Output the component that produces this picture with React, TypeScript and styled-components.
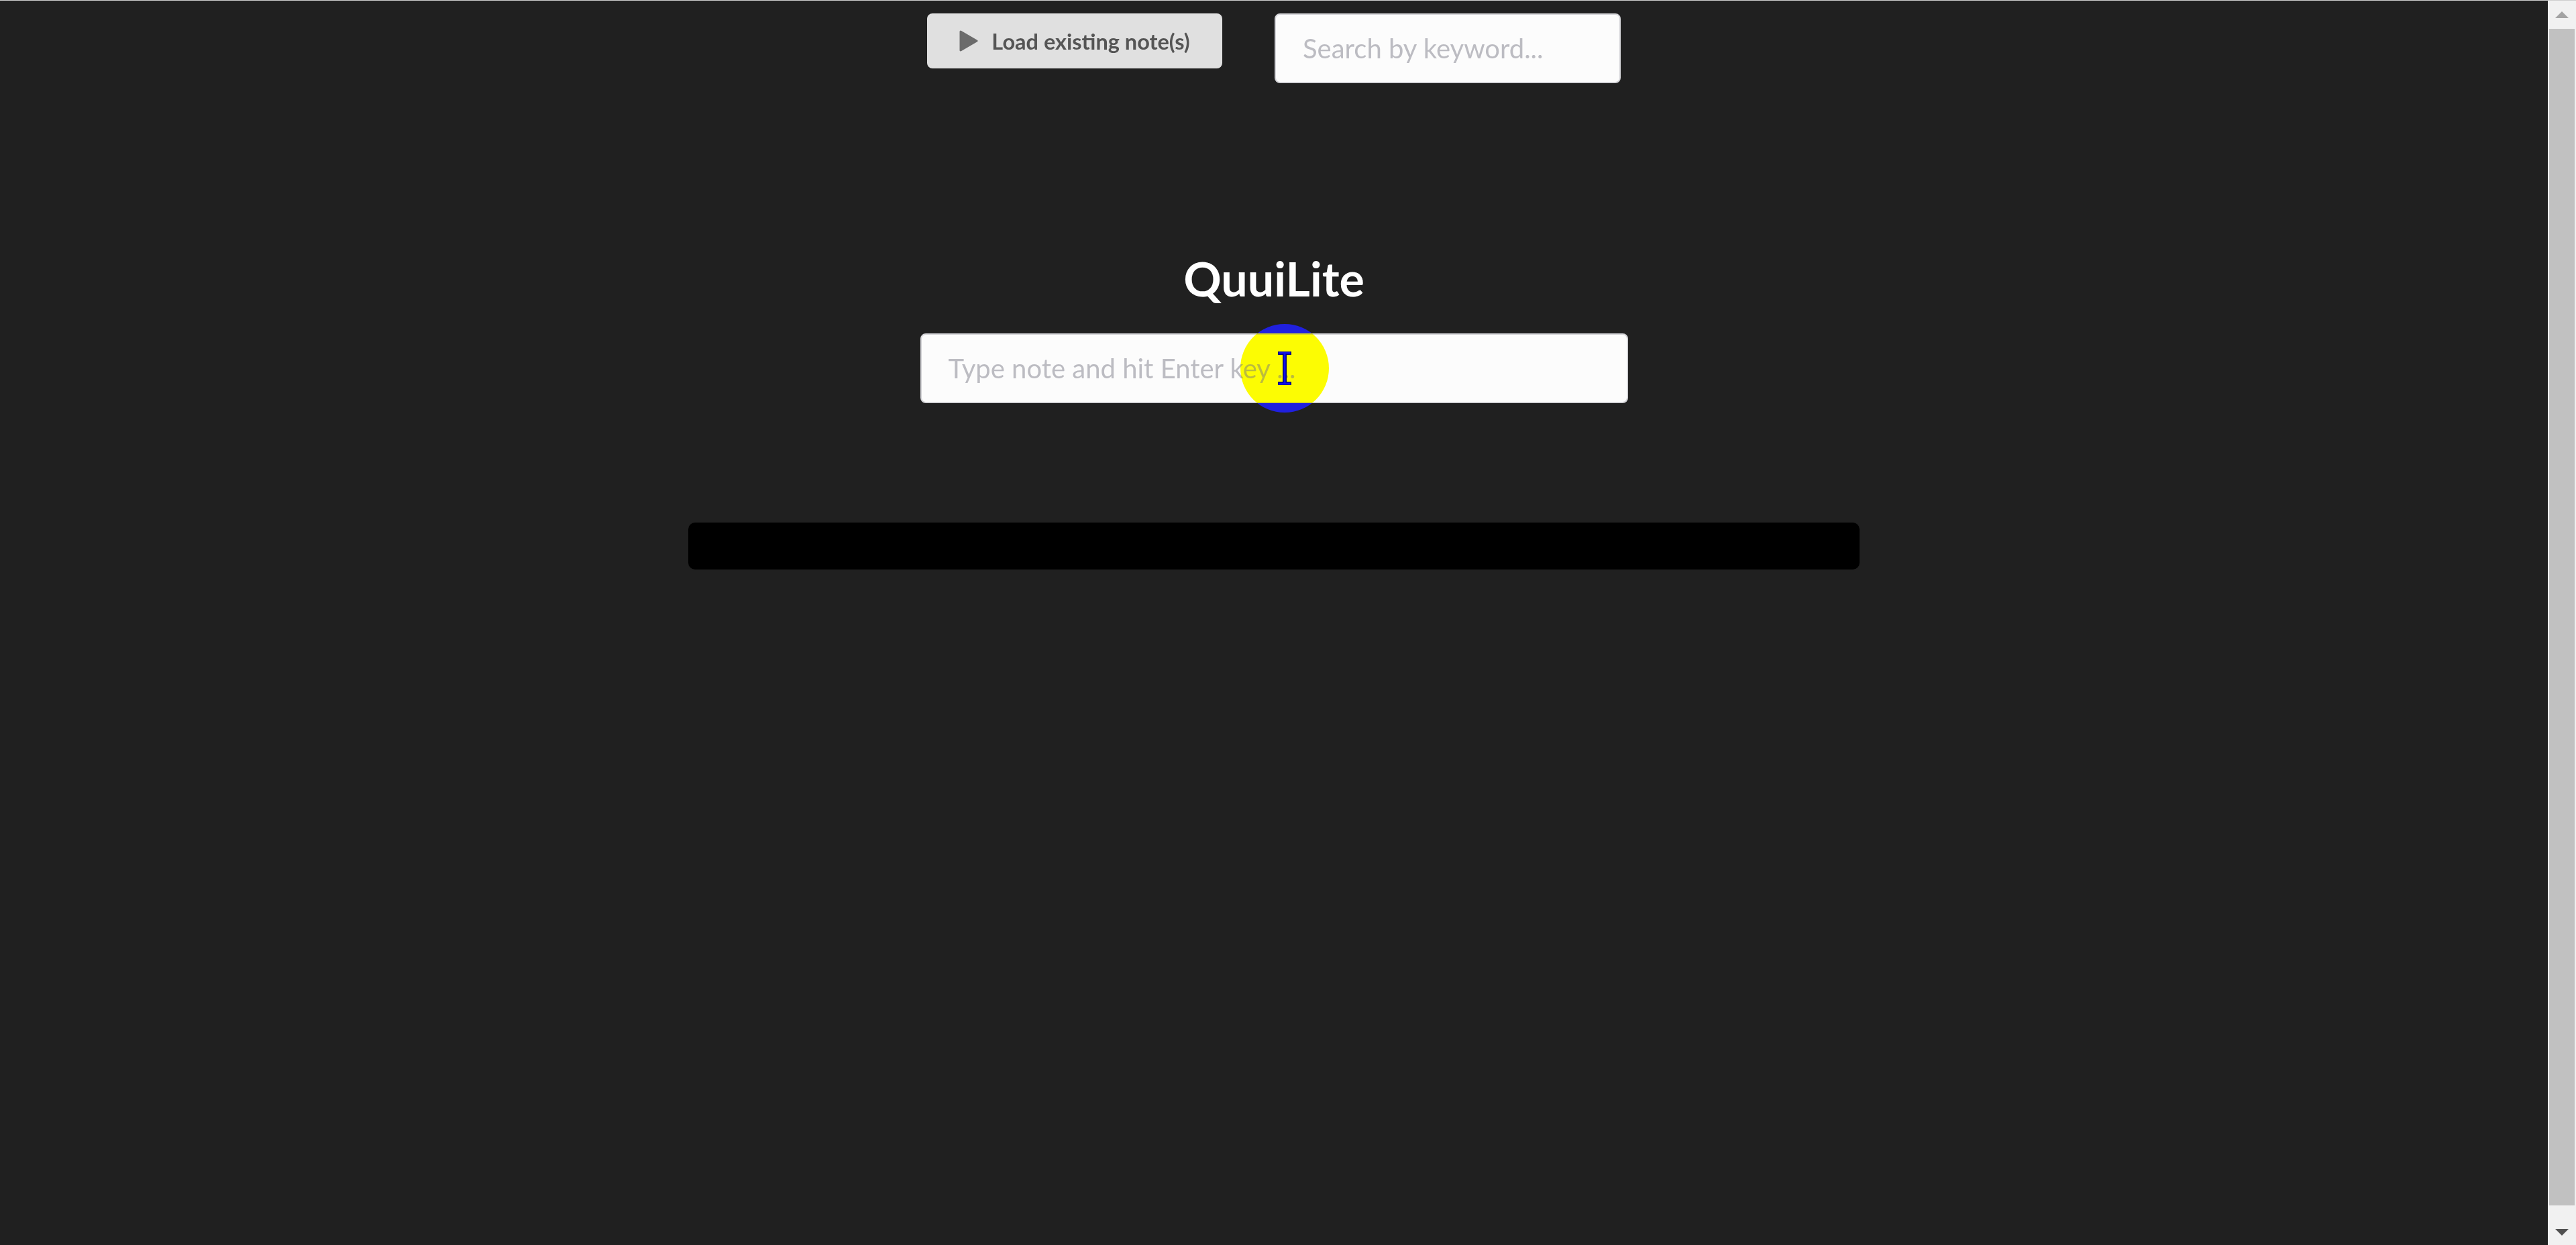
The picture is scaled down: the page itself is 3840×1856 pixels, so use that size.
import React from "react";
import styled, { createGlobalStyle } from "styled-components";

const GlobalStyle = createGlobalStyle`
  * { box-sizing: border-box; }
  html, body {
    margin: 0;
    padding: 0;
    height: 100%;
    overflow: hidden;
    background: #202020;
  }
  body {
    font-family: Lato, "Noto Sans", "Liberation Sans", sans-serif;
  }
  #root { height: 100%; }
`;

const Shell = styled.div`
  display: flex;
  height: 100vh;
  border-top: 1px solid #cfcfcf;
`;

const Main = styled.main`
  flex: 1;
  display: flex;
  flex-direction: column;
  align-items: center;
  background: #202020;
  isolation: isolate;
  padding-top: 19px;
`;

const TopBar = styled.div`
  display: flex;
  align-items: flex-start;
  gap: 78px;
`;

const LoadButton = styled.button`
  width: 440px;
  height: 82px;
  display: flex;
  align-items: center;
  justify-content: center;
  gap: 20px;
  padding: 0;
  border: none;
  border-radius: 8px;
  background: #e0e0e0;
  color: #555555;
  font-family: Lato, "Liberation Sans", sans-serif;
  font-weight: 700;
  font-size: 32.5px;
  cursor: pointer;
`;

const TextField = styled.input<{ $width: number }>`
  width: ${(p) => p.$width}px;
  height: 104px;
  padding: 0 40px;
  border: 2px solid #d4d4d8;
  border-radius: 8px;
  background: #fcfcfc;
  color: #333333;
  font-family: Lato, "Liberation Sans", sans-serif;
  font-size: 40px;
  outline: none;
  &::placeholder {
    color: #bcbcc2;
  }
`;

const Title = styled.h1`
  margin: 249px 0 0;
  color: #ffffff;
  font-family: Lato, "Liberation Sans", sans-serif;
  font-weight: 700;
  font-size: 70px;
  line-height: normal;
`;

const NoteWrap = styled.div`
  position: relative;
  margin-top: 40px;
`;

const Highlight = styled.div`
  position: absolute;
  left: 477px;
  top: -14px;
  width: 132px;
  height: 132px;
  border-radius: 50%;
  background: #0000ff;
  mix-blend-mode: difference;
  pointer-events: none;
`;

const IBeam = styled.svg`
  position: absolute;
  left: 533px;
  top: 27px;
  pointer-events: none;
`;

const NotesBar = styled.div`
  width: 1746px;
  height: 70px;
  margin-top: 178px;
  background: #000000;
  border-radius: 10px;
`;

const ScrollBar = styled.div`
  width: 42px;
  display: flex;
  flex-direction: column;
  background: #f1f1f1;
`;

const ScrollArrow = styled.div<{ $offset: number }>`
  height: 42px;
  display: flex;
  align-items: center;
  justify-content: center;
  padding-top: ${(p) => p.$offset}px;
`;

const Track = styled.div`
  flex: 1;
  display: flex;
  padding: 0 2px 17px;
`;

const Thumb = styled.div`
  flex: 1;
  background: #c1c1c1;
`;

const PlayIcon = () => (
  <svg width="28" height="32" viewBox="0 0 28 32">
    <polygon
      points="2,2 26,16 2,30"
      fill="#6b6b6b"
      stroke="#6b6b6b"
      strokeWidth="3"
      strokeLinejoin="round"
    />
  </svg>
);

const Arrow = ({ up, color }: { up: boolean; color: string }) => (
  <svg width="20" height="10" viewBox="0 0 20 10">
    <polygon points={up ? "10,0 20,10 0,10" : "0,0 20,0 10,10"} fill={color} />
  </svg>
);

export default function App() {
  return (
    <>
      <GlobalStyle />
      <Shell>
        <Main>
          <TopBar>
            <LoadButton type="button">
              <PlayIcon />
              <span>Load existing note(s)</span>
            </LoadButton>
            <TextField $width={516} placeholder="Search by keyword..." />
          </TopBar>
          <Title>QuuiLite</Title>
          <NoteWrap>
            <TextField $width={1055} placeholder="Type note and hit Enter key ..." />
            <Highlight />
            <IBeam width="20" height="50" viewBox="0 0 20 50">
              <path
                d="M3 2 H17 M10 2 V48 M3 48 H17"
                stroke="#00007a"
                strokeWidth="6"
                strokeLinecap="square"
                fill="none"
              />
              <path
                d="M3 2 H17 M10 2 V48 M3 48 H17"
                stroke="#1010e8"
                strokeWidth="3"
                strokeLinecap="square"
                fill="none"
              />
            </IBeam>
          </NoteWrap>
          <NotesBar />
        </Main>
        <ScrollBar>
          <ScrollArrow $offset={0}>
            <Arrow up color="#a3a3a3" />
          </ScrollArrow>
          <Track>
            <Thumb />
          </Track>
          <ScrollArrow $offset={4}>
            <Arrow up={false} color="#505050" />
          </ScrollArrow>
        </ScrollBar>
      </Shell>
    </>
  );
}
